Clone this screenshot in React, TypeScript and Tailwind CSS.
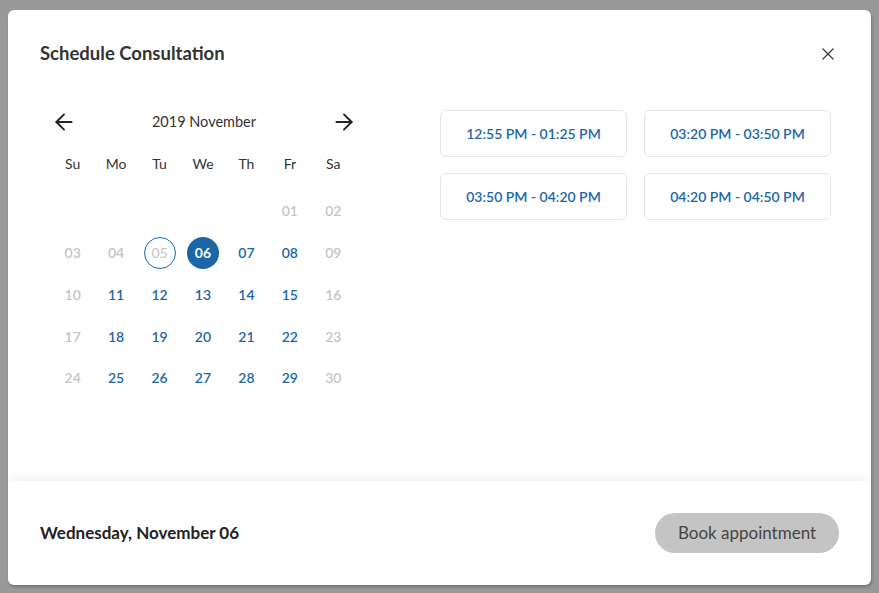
import { ArrowLeft, ArrowRight } from "lucide-react";

const days = ["Su", "Mo", "Tu", "We", "Th", "Fr", "Sa"];

// null = empty cell, otherwise [day, state]
type Cell = null | { d: number; state: "off" | "on" | "today" | "selected" };

const buildCells = (): Cell[] => {
  const cells: Cell[] = [null, null, null, null, null];
  for (let d = 1; d <= 30; d++) {
    const col = (d + 4) % 7;
    let state: "off" | "on" | "today" | "selected" = "on";
    if (col === 0 || col === 6 || d < 5) state = "off";
    if (d === 5) state = "today";
    if (d === 6) state = "selected";
    cells.push({ d, state });
  }
  return cells;
};

const slots = [
  "12:55 PM - 01:25 PM",
  "03:20 PM - 03:50 PM",
  "03:50 PM - 04:20 PM",
  "04:20 PM - 04:50 PM",
];

export default function App() {
  const cells = buildCells();

  return (
    <div
      className="w-[879px] h-[593px] bg-[#999999] pt-[10px] pl-[8px] overflow-hidden"
      style={{ fontFamily: "Lato, 'Noto Sans', sans-serif" }}
    >
      <div className="w-[863px] h-[575px] bg-white rounded-[6px] flex flex-col overflow-hidden shadow-[1px_2px_3px_rgba(0,0,0,0.25)]">
        {/* header */}
        <div className="h-[88px] flex items-center justify-between pl-8 pr-[37px] shrink-0">
          <h2 className="text-[18.5px] font-bold text-[#333333]">Schedule Consultation</h2>
          <button className="w-3 h-3 text-[#333a44]">
            <svg width="12" height="12" viewBox="0 0 12 12" fill="none" stroke="currentColor" strokeWidth="1.2">
              <path d="M0.5 0.5 L11.5 11.5 M11.5 0.5 L0.5 11.5" />
            </svg>
          </button>
        </div>

        {/* body */}
        <div className="flex-1 flex pt-[12px] pl-[43px]">
          <div className="w-[304px]">
            <div className="h-6 flex items-center justify-between -mr-[2px]">
              <ArrowLeft size={26} strokeWidth={1.8} className="text-[#222222]" />
              <span className="text-[14.5px] text-[#333333]">2019 November</span>
              <ArrowRight size={26} strokeWidth={1.8} className="text-[#222222]" />
            </div>
            <div className="grid grid-cols-7 mt-5 h-5 items-center">
              {days.map((d) => (
                <div key={d} className="text-center text-[14px] text-[#333333] -mt-[2px]">
                  {d}
                </div>
              ))}
            </div>
            <div className="grid grid-cols-7 mt-4">
              {cells.map((c, i) => (
                <div key={i} className="h-[41.75px] flex items-center justify-center">
                  {c && (
                    <span
                      className={
                        c.state === "selected"
                          ? "w-8 h-8 rounded-full bg-[#1b66a6] text-white font-bold flex items-center justify-center text-[14px]"
                          : c.state === "today"
                          ? "w-8 h-8 rounded-full border border-[#1b66a6] text-[#c4c4c4] flex items-center justify-center text-[14px]"
                          : c.state === "on"
                          ? "text-[14px] text-[#1b66a6] font-semibold"
                          : "text-[14px] text-[#c4c4c4] font-semibold"
                      }
                    >
                      {String(c.d).padStart(2, "0")}
                    </span>
                  )}
                </div>
              ))}
            </div>
          </div>

          <div className="ml-[85px] grid grid-cols-[187px_187px] gap-x-[17px] gap-y-[16px] content-start">
            {slots.map((s) => (
              <button
                key={s}
                className="h-[47px] rounded-[6px] border border-[#e6e6e6] text-[14px] text-[#1b66a6] font-semibold flex items-center justify-center"
              >
                {s}
              </button>
            ))}
          </div>
        </div>

        {/* footer */}
        <div className="h-[104px] shrink-0 flex items-center justify-between px-8 shadow-[0_-6px_10px_-2px_rgba(0,0,0,0.06)]">
          <span className="text-[17px] font-bold text-[#222222]">Wednesday, November 06</span>
          <button className="w-[184px] h-10 rounded-full bg-[#c4c4c4] text-[17px] text-[#444444]">
            Book appointment
          </button>
        </div>
      </div>
    </div>
  );
}
